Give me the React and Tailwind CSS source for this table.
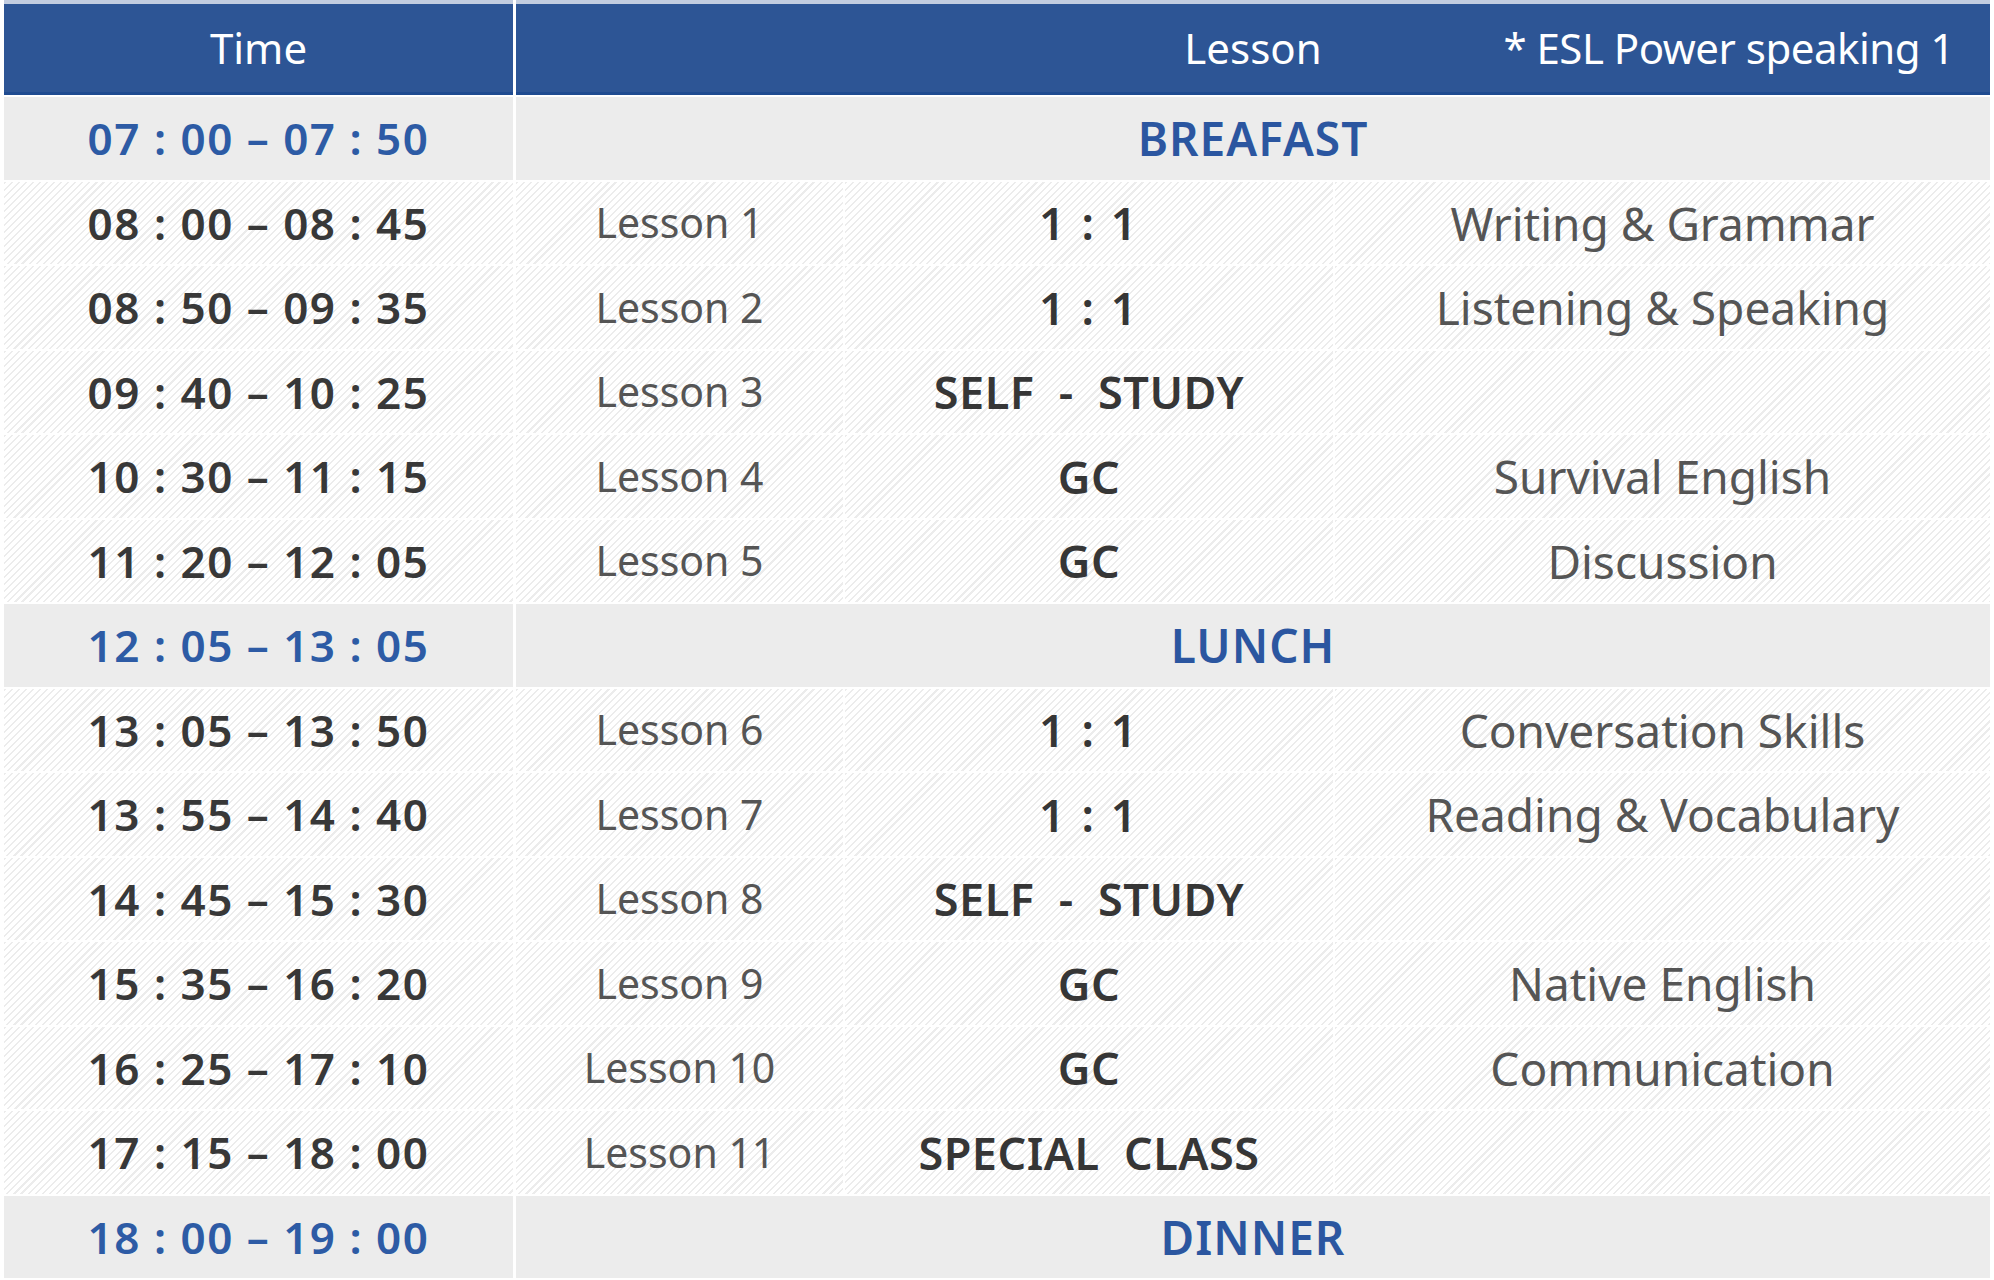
import React from "react";

const hatch =
  "bg-[repeating-linear-gradient(135deg,#ececec_0px,#ececec_1.5px,#ffffff_1.5px,#ffffff_5px)]";

const rows = [
  { meal: true, time: "07 : 00 – 07 : 50", title: "BREAFAST" },
  { time: "08 : 00 – 08 : 45", lesson: "Lesson 1", type: "1 : 1", subject: "Writing & Grammar" },
  { time: "08 : 50 – 09 : 35", lesson: "Lesson 2", type: "1 : 1", subject: "Listening & Speaking" },
  { time: "09 : 40 – 10 : 25", lesson: "Lesson 3", type: "SELF  -  STUDY", subject: "" },
  { time: "10 : 30 – 11 : 15", lesson: "Lesson 4", type: "GC", subject: "Survival English" },
  { time: "11 : 20 – 12 : 05", lesson: "Lesson 5", type: "GC", subject: "Discussion" },
  { meal: true, time: "12 : 05 – 13 : 05", title: "LUNCH" },
  { time: "13 : 05 – 13 : 50", lesson: "Lesson 6", type: "1 : 1", subject: "Conversation Skills" },
  { time: "13 : 55 – 14 : 40", lesson: "Lesson 7", type: "1 : 1", subject: "Reading & Vocabulary" },
  { time: "14 : 45 – 15 : 30", lesson: "Lesson 8", type: "SELF  -  STUDY", subject: "" },
  { time: "15 : 35 – 16 : 20", lesson: "Lesson 9", type: "GC", subject: "Native English" },
  { time: "16 : 25 – 17 : 10", lesson: "Lesson 10", type: "GC", subject: "Communication" },
  { time: "17 : 15 – 18 : 00", lesson: "Lesson 11", type: "SPECIAL  CLASS", subject: "" },
  { meal: true, time: "18 : 00 – 19 : 00", title: "DINNER" },
];

export default function App() {
  return (
    <div
      className="w-[1994px] h-[1280px] bg-white overflow-hidden flex flex-col gap-[2px] pl-[4px] pr-[4px]"
      style={{ fontFamily: '"Noto Sans", "Open Sans", sans-serif' }}
    >
      <div className="flex h-[95px] gap-[3px] shrink-0">
        <div className="w-[509px] bg-[#2d5595] border-t-[4px] border-t-[#c2cde0] border-b-[3px] border-b-[#1f4b90] flex items-center justify-center text-white text-[42px] leading-none">
          Time
        </div>
        <div className="flex-1 bg-[#2d5595] border-t-[4px] border-t-[#c2cde0] border-b-[3px] border-b-[#1f4b90] grid grid-cols-[1fr_auto_1fr] items-center text-white text-[42px] leading-none">
          <span />
          <span>Lesson</span>
          <span className="justify-self-end pr-[36px] tracking-[-0.5px]">* ESL Power speaking 1</span>
        </div>
      </div>
      {rows.map((r, i) =>
        r.meal ? (
          <div key={i} className="flex h-[82.5px] gap-[3px] shrink-0">
            <div className="w-[509px] bg-[#ececec] flex items-center justify-center text-[#2d5ba5] font-semibold text-[44px] tracking-[1.5px] leading-none whitespace-pre">
              {r.time}
            </div>
            <div className="flex-1 bg-[#ececec] flex items-center justify-center text-[#2b56a0] font-semibold text-[46px] tracking-[1px] leading-none">
              {r.title}
            </div>
          </div>
        ) : (
          <div key={i} className="flex h-[82.5px] gap-[2px] shrink-0">
            <div className={`w-[509px] mr-[1px] ${hatch} flex items-center justify-center text-[#383838] font-semibold text-[44px] tracking-[1.5px] leading-none whitespace-pre`}>
              {r.time}
            </div>
            <div className={`w-[327px] ${hatch} flex items-center justify-center text-[#555555] text-[41px] leading-none`}>
              {r.lesson}
            </div>
            <div className={`w-[488px] ${hatch} flex items-center justify-center text-[#363636] font-semibold text-[45px] leading-none whitespace-pre ${r.type === "1 : 1" ? "tracking-[2.5px]" : "tracking-[0.5px]"}`}>
              {r.type}
            </div>
            <div className={`flex-1 ${hatch} flex items-center justify-center text-[#555555] text-[46px] leading-none whitespace-pre`}>
              {r.subject}
            </div>
          </div>
        )
      )}
    </div>
  );
}
